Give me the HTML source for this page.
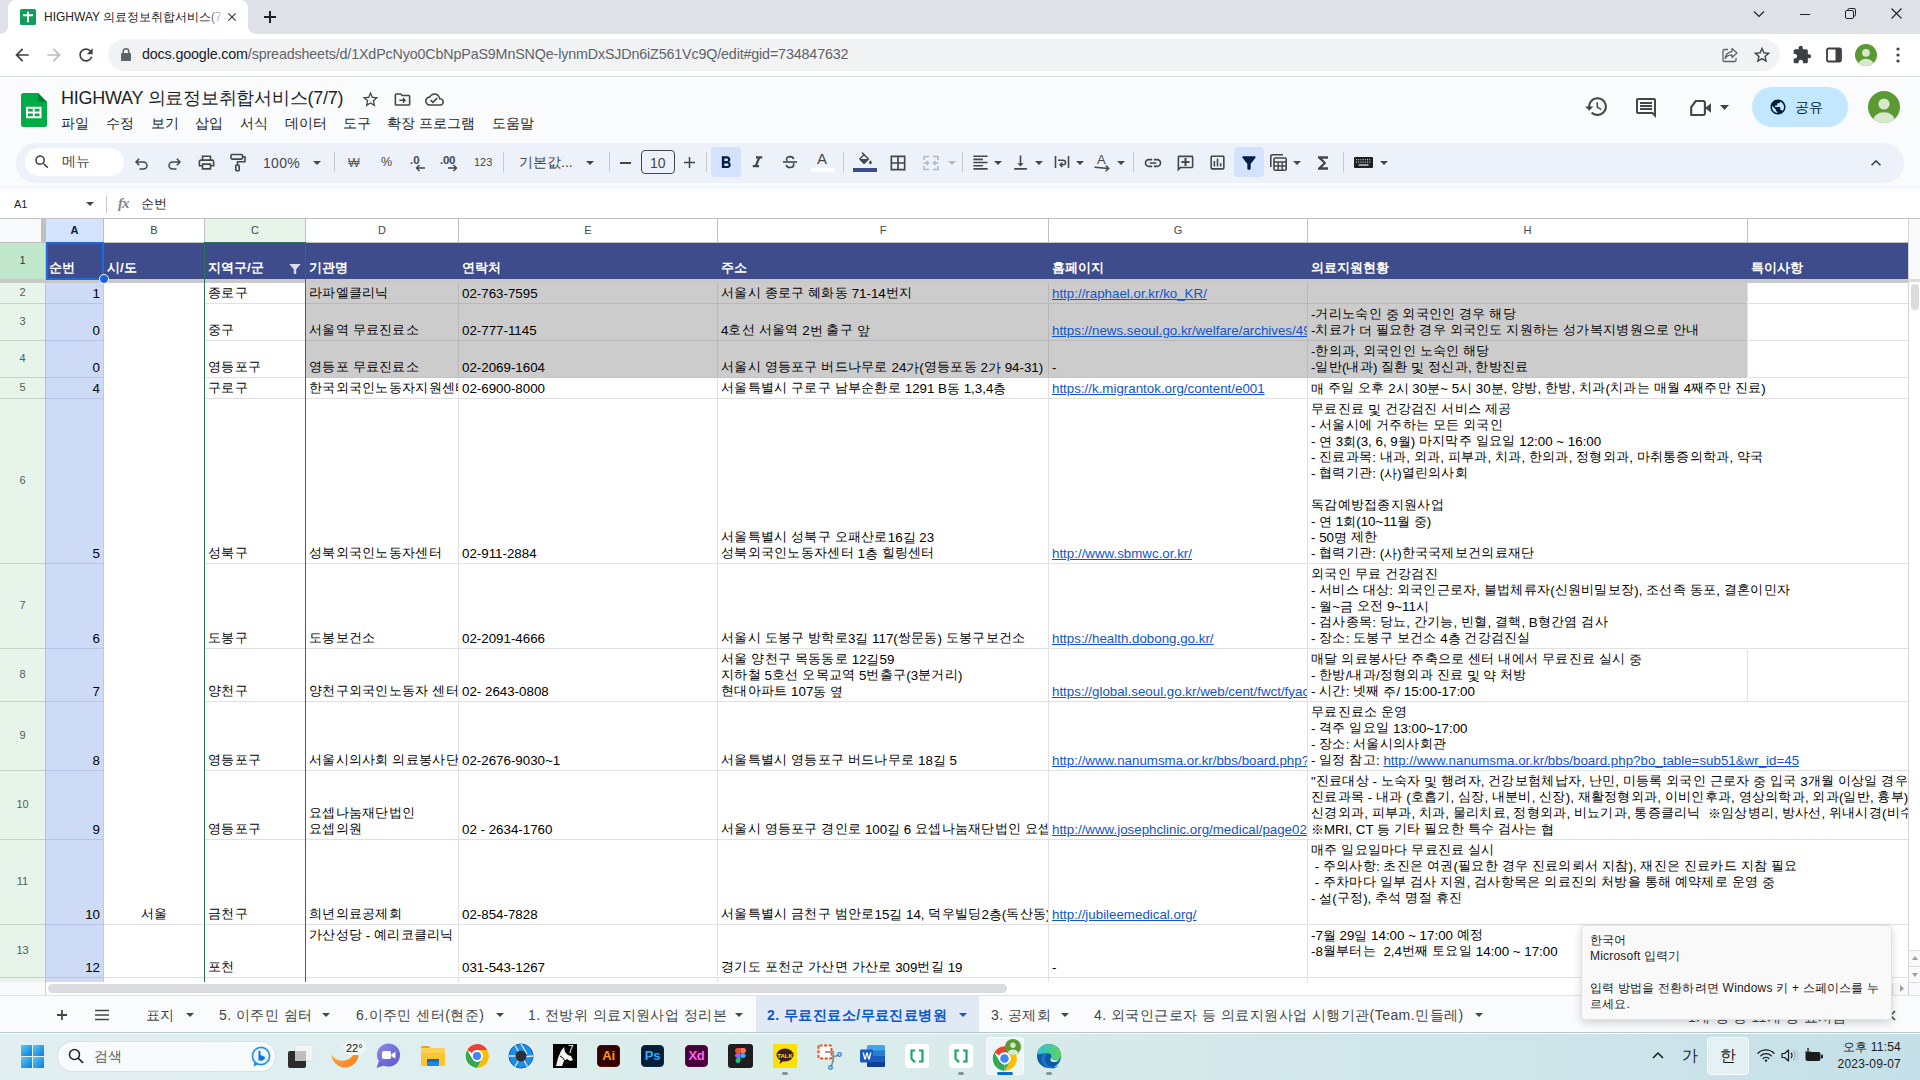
<!DOCTYPE html>
<html lang="ko">
<head>
<meta charset="utf-8">
<title>HIGHWAY 의료정보취합서비스(7/7)</title>
<style>
*{box-sizing:border-box;margin:0;padding:0}
html,body{width:1920px;height:1080px;overflow:hidden;background:#fff}
body{font-family:"Liberation Sans",sans-serif;color:#1f1f1f;position:relative}
.abs,.abs>*{position:absolute}
.t{position:absolute;white-space:nowrap;line-height:1}
svg{position:absolute;overflow:visible}
/* ---------- chrome ---------- */
#tabstrip{left:0;top:0;width:1920px;height:34px;background:#dee1e6}
#tab{left:8px;top:0;width:240px;height:34px;background:#fff;border-radius:8px 8px 0 0}
#navbar{left:0;top:34px;width:1920px;height:43px;background:#fff;border-bottom:1px solid #dadce0}
#omni{left:108px;top:39px;width:1672px;height:32px;border-radius:16px;background:#f1f3f4}
/* ---------- docs header ---------- */
#dochead{left:0;top:77px;width:1920px;height:142px;background:#f9fbfd}
#toolbar{left:16px;top:143px;width:1888px;height:40px;border-radius:20px;background:#edf2fa}
#fbar{left:0;top:190px;width:1920px;height:28px;background:#fff}
/* ---------- grid ---------- */
#grid{left:0;top:0;width:1908px;height:982px;overflow:hidden}
.c{position:absolute;white-space:pre;font-size:13.33px;line-height:16px;overflow:hidden;color:#000;display:flex;flex-direction:column;justify-content:flex-end}
.c>div{position:static;height:16px;flex:none}
a{color:#1155cc;text-decoration:underline}
.k{letter-spacing:.28px;position:relative;top:-1px}
/* ---------- bottom ---------- */
#sheetbar{left:0;top:996px;width:1920px;height:38px;background:#f9fbfd}
#taskbar{left:0;top:1034px;width:1920px;height:46px;background:linear-gradient(90deg,#e1eff3 0%,#deeeee 25%,#d9ebeb 50%,#d1e6ea 72%,#c5e0e8 100%)}
</style>
</head>
<body>
<!-- CHROME TAB STRIP -->
<div id="tabstrip" class="abs"></div>
<div id="tab" class="abs"></div>
<svg style="left:0;top:26px" width="8" height="8" viewBox="0 0 8 8"><path d="M0 8h8V0A8 8 0 0 1 0 8z" fill="#fff"/></svg>
<svg style="left:248px;top:26px" width="8" height="8" viewBox="0 0 8 8"><path d="M8 8H0V0a8 8 0 0 0 8 8z" fill="#fff"/></svg>
<!-- favicon -->
<svg style="left:20px;top:9px" width="16" height="16" viewBox="0 0 16 16"><rect width="16" height="16" rx="1.5" fill="#0f9d58"/><path d="M3 5.2h10v2H9v6H7v-6H3z" fill="#fff"/><rect x="7" y="2.6" width="2" height="3" fill="#fff"/></svg>
<div class="t" style="left:44px;top:10px;font-size:12px;color:#202124;width:178px;overflow:hidden;height:15px;line-height:14px">HIGHWAY 의료정보취합서비스(7/7) - Google Sheets</div>
<div class="abs" style="left:206px;top:6px;width:18px;height:22px;background:linear-gradient(90deg,rgba(255,255,255,0),#fff)"></div>
<svg style="left:225px;top:10px" width="14" height="14" viewBox="0 0 24 24"><path d="M19 6.41L17.59 5 12 10.59 6.41 5 5 6.41 10.59 12 5 17.59 6.41 19 12 13.41 17.59 19 19 17.59 13.41 12z" fill="#3c4043"/></svg>
<svg style="left:263px;top:10px" width="14" height="14" viewBox="0 0 14 14"><path d="M6 1h2v5h5v2H8v5H6V8H1V6h5z" fill="#202124"/></svg>
<!-- window controls -->
<svg style="left:1753px;top:9px" width="12" height="10" viewBox="0 0 12 10"><path d="M1 2.5l5 5 5-5" fill="none" stroke="#202124" stroke-width="1.2"/></svg>
<div class="abs" style="left:1800px;top:14px;width:10px;height:1px;background:#202124"></div>
<svg style="left:1845px;top:8px" width="11" height="11" viewBox="0 0 11 11"><rect x=".5" y="2.5" width="8" height="8" rx="1.5" fill="none" stroke="#202124"/><path d="M2.8 2.3V2a1.5 1.5 0 0 1 1.5-1.5H9A1.5 1.5 0 0 1 10.5 2v4.7A1.5 1.5 0 0 1 9 8.2h-.4" fill="none" stroke="#202124"/></svg>
<svg style="left:1891px;top:8px" width="11" height="11" viewBox="0 0 11 11"><path d="M.5.5l10 10M10.500 .5l-10 10" fill="none" stroke="#202124" stroke-width="1.1"/></svg>
<!-- NAV BAR -->
<div id="navbar" class="abs"></div>
<div id="omni" class="abs"></div>
<svg style="left:12px;top:45px" width="20" height="20" viewBox="0 0 24 24"><path d="M20 11H7.83l5.59-5.59L12 4l-8 8 8 8 1.41-1.41L7.83 13H20v-2z" fill="#3c4043"/></svg>
<svg style="left:44px;top:45px" width="20" height="20" viewBox="0 0 24 24"><path d="M12 4l-1.41 1.41L16.170 11H4v2h12.170l-5.580 5.590L12 20l8-8z" fill="#babcbe"/></svg>
<svg style="left:76px;top:45px" width="20" height="20" viewBox="0 0 24 24"><path d="M17.650 6.350C16.200 4.900 14.210 4 12 4c-4.420 0-7.990 3.580-7.990 8s3.570 8 7.990 8c3.730 0 6.840-2.550 7.730-6h-2.080c-.82 2.330-3.040 4-5.650 4-3.310 0-6-2.690-6-6s2.690-6 6-6c1.660 0 3.140.69 4.220 1.780L13 11h7V4l-2.350 2.350z" fill="#3c4043"/></svg>
<svg style="left:120px;top:48px" width="12" height="14" viewBox="0 0 12 14"><path d="M10 5H9.500V3.500a3.500 3.500 0 0 0-7 0V5H2a1 1 0 0 0-1 1v6a1 1 0 0 0 1 1h8a1 1 0 0 0 1-1V6a1 1 0 0 0-1-1zM4 3.500a2 2 0 0 1 4 0V5H4z" fill="#5f6368"/></svg>
<div class="t" id="url" style="left:142px;top:47px;font-size:14.3px;color:#5f6368;letter-spacing:-0.15px"><span style="color:#202124">docs.google.com</span>/spreadsheets/d/1XdPcNyo0CbNpPaS9MnSNQe-lynmDxSJDn6iZ561Vc9Q/edit#gid=734847632</div>
<!-- omnibox right icons -->
<svg style="left:1721px;top:46px" width="18" height="18" viewBox="0 0 18 18"><path d="M11 2.500l5 4.500-5 4.500V8.800C7.500 8.800 5.500 10 4.200 12.500 4.600 8.800 7 6.200 11 5.600z" fill="none" stroke="#5f6368" stroke-width="1.3" stroke-linejoin="round"/><path d="M7 3.500H3.200A1.200 1.200 0 0 0 2 4.700v9.600a1.200 1.200 0 0 0 1.200 1.200h10.600a1.200 1.200 0 0 0 1.200-1.200V12" fill="none" stroke="#5f6368" stroke-width="1.3"/></svg>
<svg style="left:1752px;top:45px" width="20" height="20" viewBox="0 0 24 24"><path d="M22 9.240l-7.190-.62L12 2 9.190 8.630 2 9.240l5.460 4.730L5.820 21 12 17.270 18.180 21l-1.630-7.030L22 9.240zM12 15.400l-3.760 2.270 1-4.280-3.320-2.880 4.380-.38L12 6.100l1.710 4.040 4.380.38-3.320 2.880 1 4.280L12 15.400z" fill="#3c4043"/></svg>
<svg style="left:1792px;top:45px" width="20" height="20" viewBox="0 0 24 24"><path d="M20.500 11H19V7c0-1.100-.9-2-2-2h-4V3.500C13 2.120 11.880 1 10.500 1S8 2.120 8 3.500V5H4c-1.100 0-1.990.9-1.990 2v3.800H3.500c1.490 0 2.700 1.210 2.700 2.700s-1.210 2.700-2.700 2.700H2V20c0 1.100.9 2 2 2h3.800v-1.500c0-1.490 1.210-2.700 2.700-2.700 1.490 0 2.700 1.210 2.700 2.700V22H17c1.100 0 2-.9 2-2v-4h1.500c1.380 0 2.500-1.120 2.500-2.500S21.880 11 20.500 11z" fill="#3c4043"/></svg>
<svg style="left:1826px;top:47px" width="16" height="16" viewBox="0 0 16 16"><rect x="1" y="1.500" width="14" height="13" rx="1.500" fill="none" stroke="#3c4043" stroke-width="1.800"/><rect x="9.500" y="2" width="5" height="12" fill="#3c4043"/></svg>
<svg style="left:1855px;top:44px" width="22" height="22" viewBox="0 0 22 22"><defs><clipPath id="cpa"><circle cx="11" cy="11" r="11"/></clipPath></defs><circle cx="11" cy="11" r="11" fill="#5b9a32"/><g clip-path="url(#cpa)" fill="#d7e8cf"><circle cx="11" cy="8.800" r="3.900"/><ellipse cx="11" cy="20.500" rx="7.600" ry="5.800"/></g></svg>
<svg style="left:1896px;top:47px" width="4" height="16" viewBox="0 0 4 16"><circle cx="2" cy="2" r="1.600" fill="#3c4043"/><circle cx="2" cy="8" r="1.600" fill="#3c4043"/><circle cx="2" cy="14" r="1.600" fill="#3c4043"/></svg>
<!-- DOCS HEADER -->
<div id="dochead" class="abs"></div>
<svg style="left:21px;top:93px" width="26" height="34" viewBox="0 0 26 34"><path d="M2.500 0H17l9 9v22.500a2.500 2.500 0 0 1-2.500 2.500h-21A2.500 2.500 0 0 1 0 31.500v-29A2.500 2.500 0 0 1 2.500 0z" fill="#00ac47"/><path d="M17 0l9 9h-6.500A2.500 2.500 0 0 1 17 6.500z" fill="#00832d"/><path d="M5 13.800h15.500v11.400H5zm2 2v2.700h4.800v-2.700zm6.700 0v2.700h4.800v-2.700zm-6.700 4.600v2.800h4.800v-2.800zm6.700 0v2.800h4.800v-2.800z" fill="#fff" fill-rule="evenodd"/></svg>
<div class="t" id="doctitle" style="left:61px;top:88px;font-size:18px;letter-spacing:-0.25px;color:#1f1f1f;line-height:20px">HIGHWAY 의료정보취합서비스(7/7)</div>
<svg style="left:361px;top:90px" width="19" height="19" viewBox="0 0 24 24"><path d="M22 9.240l-7.190-.62L12 2 9.190 8.630 2 9.240l5.460 4.730L5.820 21 12 17.270 18.180 21l-1.630-7.030L22 9.240zM12 15.400l-3.760 2.270 1-4.280-3.320-2.880 4.380-.38L12 6.100l1.710 4.040 4.380.38-3.320 2.880 1 4.280L12 15.400z" fill="#444746"/></svg>
<svg style="left:393px;top:90px" width="19" height="19" viewBox="0 0 24 24"><path d="M20 6h-8l-2-2H4c-1.100 0-2 .9-2 2v12c0 1.100.9 2 2 2h16c1.100 0 2-.9 2-2V8c0-1.100-.9-2-2-2zm0 12H4V6h5.170l2 2H20v10zm-7.500-1l4-4-4-4v3H8v2h4.500v3z" fill="#444746"/></svg>
<svg style="left:425px;top:90px" width="19" height="19" viewBox="0 0 24 24"><path d="M19.350 10.040C18.670 6.590 15.640 4 12 4 9.110 4 6.600 5.640 5.350 8.040 2.340 8.360 0 10.910 0 14c0 3.310 2.690 6 6 6h13c2.760 0 5-2.240 5-5 0-2.640-2.050-4.780-4.650-4.960zM19 18H6c-2.210 0-4-1.790-4-4 0-2.050 1.530-3.760 3.560-3.970l1.070-.11.5-.95C8.080 7.140 9.940 6 12 6c2.620 0 4.880 1.860 5.390 4.430l.3 1.500 1.530.11c1.560.1 2.780 1.410 2.780 2.960 0 1.650-1.350 3-3 3zm-9-3.820l-2.090-2.090L6.500 13.500 10 17l6.010-6.010-1.410-1.410z" fill="#444746"/></svg>
<div class="t menu" style="left:61px;top:115px;font-size:14px;color:#1f1f1f;line-height:16px">파일</div>
<div class="t menu" style="left:106px;top:115px;font-size:14px;color:#1f1f1f;line-height:16px">수정</div>
<div class="t menu" style="left:151px;top:115px;font-size:14px;color:#1f1f1f;line-height:16px">보기</div>
<div class="t menu" style="left:195px;top:115px;font-size:14px;color:#1f1f1f;line-height:16px">삽입</div>
<div class="t menu" style="left:240px;top:115px;font-size:14px;color:#1f1f1f;line-height:16px">서식</div>
<div class="t menu" style="left:285px;top:115px;font-size:14px;color:#1f1f1f;line-height:16px">데이터</div>
<div class="t menu" style="left:343px;top:115px;font-size:14px;color:#1f1f1f;line-height:16px">도구</div>
<div class="t menu" style="left:387px;top:115px;font-size:14px;color:#1f1f1f;line-height:16px">확장 프로그램</div>
<div class="t menu" style="left:492px;top:115px;font-size:14px;color:#1f1f1f;line-height:16px">도움말</div>
<svg style="left:1584px;top:94px" width="25" height="25" viewBox="0 0 24 24"><path d="M13 3c-4.970 0-9 4.030-9 9H1l3.890 3.890.07.14L9 12H6c0-3.870 3.130-7 7-7s7 3.130 7 7-3.130 7-7 7c-1.930 0-3.680-.79-4.940-2.060l-1.420 1.420C8.270 19.990 10.510 21 13 21c4.970 0 9-4.030 9-9s-4.030-9-9-9zm-1 5v5l4.280 2.540.72-1.210-3.500-2.080V8H12z" fill="#444746"/></svg>
<svg style="left:1634px;top:96px" width="24" height="24" viewBox="0 0 24 24"><path d="M21.990 4c0-1.100-.89-2-1.990-2H4c-1.100 0-2 .9-2 2v12c0 1.100.9 2 2 2h14l4 4-.01-18zM20 4v13.170L18.830 16H4V4h16zM6 12h12v2H6zm0-3h12v2H6zm0-3h12v2H6z" fill="#444746"/></svg>
<svg style="left:1690px;top:99px" width="22" height="18" viewBox="0 0 22 18"><path d="M1.200 16V8.200L5.800 2H13.300A1.600 1.600 0 0 1 14.900 3.600V14.400A1.600 1.600 0 0 1 13.300 16Z" fill="none" stroke="#444746" stroke-width="2.100" stroke-linejoin="round"/><path d="M15 9L21 4.300v9.400z" fill="#444746"/></svg>
<svg style="left:1720px;top:105px" width="9" height="5" viewBox="0 0 9 5"><path d="M0 0h9L4.500 5z" fill="#444746"/></svg>
<div class="abs" style="left:1752px;top:87px;width:96px;height:40px;border-radius:20px;background:#c2e7ff"></div>
<svg style="left:1769px;top:98px" width="18" height="18" viewBox="0 0 24 24"><path d="M12 2C6.480 2 2 6.480 2 12s4.480 10 10 10 10-4.480 10-10S17.520 2 12 2zm-1 17.930c-3.950-.49-7-3.850-7-7.930 0-.62.08-1.210.21-1.790L9 15v1c0 1.100.9 2 2 2v1.930zm6.900-2.540c-.26-.81-1-1.390-1.900-1.390h-1v-3c0-.55-.45-1-1-1H8v-2h2c.55 0 1-.45 1-1V7h2c1.100 0 2-.9 2-2v-.41c2.930 1.190 5 4.060 5 7.410 0 2.080-.8 3.970-2.100 5.390z" fill="#001d35"/></svg>
<div class="t" style="left:1795px;top:99px;font-size:14px;color:#001d35;line-height:16px;font-weight:500">공유</div>
<svg style="left:1868px;top:91px" width="32" height="32" viewBox="0 0 32 32"><defs><clipPath id="cpb"><circle cx="16" cy="16" r="16"/></clipPath></defs><circle cx="16" cy="16" r="16" fill="#5b9a32"/><g clip-path="url(#cpb)" fill="#d7e8cf"><circle cx="16" cy="13" r="5.600"/><ellipse cx="16" cy="29.500" rx="11" ry="8.200"/></g></svg>
<div id="toolbar" class="abs"></div>
<div class="abs" style="left:25px;top:148px;width:99px;height:28px;border-radius:14px;background:#fff"></div>
<svg style="left:33px;top:153px" width="18" height="18" viewBox="0 0 24 24"><path d="M15.500 14h-.79l-.28-.27C15.410 12.590 16 11.110 16 9.500 16 5.910 13.090 3 9.500 3S3 5.910 3 9.500 5.910 16 9.500 16c1.610 0 3.090-.59 4.230-1.570l.27.28v.79l5 4.990L20.490 19l-4.990-5zm-6 0C7.010 14 5 11.990 5 9.500S7.010 5 9.500 5 14 7.010 14 9.500 11.990 14 9.500 14z" fill="#444746"/></svg>
<div class="t" style="left:62px;top:153px;font-size:14px;color:#444746;line-height:16px">메뉴</div>
<svg style="left:134px;top:156px" width="16" height="16" viewBox="0 0 16 16"><path d="M5.200 2.800L2 6l3.200 3.200M2.300 6h7.200a3.500 3.500 0 0 1 0 7H5.500" fill="none" stroke="#444746" stroke-width="1.500"/></svg>
<svg style="left:166px;top:156px" width="16" height="16" viewBox="0 0 16 16"><path d="M10.800 2.800L14 6l-3.200 3.200M13.700 6H6.500a3.500 3.500 0 0 0 0 7h4" fill="none" stroke="#444746" stroke-width="1.500"/></svg>
<svg style="left:196.5px;top:153px" width="19" height="19" viewBox="0 0 24 24"><path d="M19 8h-1V3H6v5H5c-1.660 0-3 1.340-3 3v6h4v4h12v-4h4v-6c0-1.660-1.340-3-3-3zM8 5h8v3H8V5zm8 12v2H8v-4h8v2zm2-2v-2H6v2H4v-4c0-.55.45-1 1-1h14c.55 0 1 .45 1 1v4h-2z" fill="#444746"/></svg>
<svg style="left:229px;top:153px" width="18" height="19" viewBox="0 0 18 19"><g fill="none" stroke="#444746" stroke-width="1.600" stroke-linejoin="round"><rect x="2" y="1.500" width="11.500" height="4.600" rx="1"/><path d="M13.500 3.800H16v5H8.500v3.200"/><rect x="6.800" y="12" width="3.400" height="5.800" rx=".8"/></g></svg>
<div class="t" style="left:263px;top:155px;font-size:14px;color:#444746;line-height:16px;letter-spacing:.3px">100%</div>
<svg style="left:313px;top:160.5px" width="8" height="4" viewBox="0 0 8 4"><path d="M0 0h8L4 4z" fill="#444746"/></svg>
<div class="abs" style="left:334px;top:152px;width:1px;height:20px;background:#c7c7c7"></div>
<div class="t" style="left:348px;top:155px;font-size:12.500px;color:#5a5d5c;line-height:16px">₩</div>
<div class="t" style="left:381px;top:154px;font-size:12.500px;color:#444746;line-height:16px">%</div>
<div class="t" style="left:410px;top:152px;font-size:11.500px;color:#444746;line-height:16px;font-weight:bold">.0</div>
<svg style="left:415px;top:164px" width="10" height="8" viewBox="0 0 10 8"><path d="M10 4H2M4.500 1L1.500 4l3 3" fill="none" stroke="#444746" stroke-width="1.400"/></svg>
<div class="t" style="left:440px;top:152px;font-size:11.500px;color:#444746;line-height:16px;font-weight:bold;letter-spacing:-.3px">.00</div>
<svg style="left:448px;top:164px" width="10" height="8" viewBox="0 0 10 8"><path d="M0 4h8M5.500 1l3 3-3 3" fill="none" stroke="#444746" stroke-width="1.400"/></svg>
<div class="t" style="left:474px;top:154px;font-size:11px;color:#444746;line-height:16px">123</div>
<div class="abs" style="left:503px;top:152px;width:1px;height:20px;background:#c7c7c7"></div>
<div class="t" style="left:519px;top:154px;font-size:14px;color:#444746;line-height:16px">기본값...</div>
<svg style="left:586px;top:160.5px" width="8" height="4" viewBox="0 0 8 4"><path d="M0 0h8L4 4z" fill="#444746"/></svg>
<div class="abs" style="left:609px;top:152px;width:1px;height:20px;background:#c7c7c7"></div>
<div class="abs" style="left:620px;top:162px;width:11px;height:1.500px;background:#444746"></div>
<div class="abs" style="left:641px;top:150px;width:34px;height:24px;border:1px solid #444746;border-radius:4px"></div>
<div class="t" style="left:650px;top:155px;font-size:14px;color:#444746;line-height:16px">10</div>
<svg style="left:684px;top:157px" width="11" height="11" viewBox="0 0 11 11"><path d="M5.500 0v11M0 5.500h11" stroke="#444746" stroke-width="1.500"/></svg>
<div class="abs" style="left:706px;top:152px;width:1px;height:20px;background:#c7c7c7"></div>
<div class="abs" style="left:711px;top:147px;width:30px;height:30px;border-radius:4px;background:#d3e3fd"></div>
<svg style="left:716px;top:152.5px" width="20" height="20" viewBox="0 0 24 24"><path d="M15.600 10.790c.97-.67 1.650-1.770 1.650-2.790 0-2.260-1.750-4-4-4H7v14h7.040c2.090 0 3.710-1.700 3.710-3.790 0-1.520-.86-2.820-2.150-3.420zM10 6.500h3c.83 0 1.500.67 1.500 1.500s-.67 1.500-1.500 1.500h-3v-3zm3.500 9H10v-3h3.500c.83 0 1.500.67 1.500 1.500s-.67 1.500-1.500 1.500z" fill="#041e49"/></svg>
<svg style="left:748px;top:153px" width="19" height="19" viewBox="0 0 24 24"><path d="M10 4v3h2.210l-3.420 8H6v3h8v-3h-2.210l3.420-8H18V4z" fill="#444746"/></svg>
<svg style="left:781px;top:153px" width="18" height="18" viewBox="0 0 18 18"><path d="M12.600 6.200C12.300 4.500 11 3.600 9 3.600c-2.100 0-3.500 1-3.500 2.600 0 .7.300 1.300.9 1.700M5.300 11.800c.2 1.700 1.600 2.700 3.800 2.700 2.100 0 3.600-1 3.600-2.700 0-.6-.2-1.100-.5-1.500" fill="none" stroke="#444746" stroke-width="1.600"/><path d="M2 9h14" stroke="#444746" stroke-width="1.600"/></svg>
<div class="t" style="left:817px;top:151px;font-size:15px;color:#444746;line-height:16px">A</div>
<div class="abs" style="left:811px;top:168px;width:24px;height:4px;background:#fff"></div>
<div class="abs" style="left:843px;top:152px;width:1px;height:20px;background:#c7c7c7"></div>
<svg style="left:856.5px;top:151.5px" width="17" height="17" viewBox="0 0 24 24"><path d="M16.560 8.940L7.620 0 6.210 1.410l2.380 2.380-5.150 5.150c-.59.59-.59 1.540 0 2.120l5.500 5.500c.29.29.68.44 1.060.44s.77-.15 1.060-.44l5.500-5.500c.59-.58.59-1.530 0-2.120zM5.210 10L10 5.210 14.790 10H5.210zM19 11.500s-2 2.170-2 3.500c0 1.100.9 2 2 2s2-.9 2-2c0-1.330-2-3.500-2-3.500z" fill="#444746"/></svg>
<div class="abs" style="left:853px;top:168px;width:24px;height:4px;background:#3d4b8b"></div>
<svg style="left:888px;top:152.5px" width="20" height="20" viewBox="0 0 24 24"><path d="M3 3v18h18V3H3zm8 16H5v-6h6v6zm0-8H5V5h6v6zm8 8h-6v-6h6v6zm0-8h-6V5h6v6z" fill="#444746"/></svg>
<svg style="left:922px;top:154px" width="18" height="18" viewBox="0 0 18 18"><g fill="none" stroke="#b5b9bf" stroke-width="1.600"><path d="M2 6V2.500h5M11 2.500h5V6M2 12v3.500h5M11 15.500h5V12"/><path d="M1.500 9h5M4.500 7l2 2-2 2M16.500 9h-5M13.500 7l-2 2 2 2"/></g></svg>
<svg style="left:947.5px;top:160.5px" width="8" height="4" viewBox="0 0 8 4"><path d="M0 0h8L4 4z" fill="#b5b9bf"/></svg>
<div class="abs" style="left:962px;top:152px;width:1px;height:20px;background:#c7c7c7"></div>
<svg style="left:970.5px;top:153px" width="19" height="19" viewBox="0 0 24 24"><path d="M15 15H3v2h12v-2zm0-8H3v2h12V7zM3 13h18v-2H3v2zm0 8h18v-2H3v2zM3 3v2h18V3H3z" fill="#444746"/></svg>
<svg style="left:994px;top:160.5px" width="8" height="4" viewBox="0 0 8 4"><path d="M0 0h8L4 4z" fill="#444746"/></svg>
<svg style="left:1011px;top:153px" width="19" height="19" viewBox="0 0 24 24"><path d="M16 13h-3V3h-2v10H8l4 4 4-4zM4 19v2h16v-2H4z" fill="#444746"/></svg>
<svg style="left:1035px;top:160.5px" width="8" height="4" viewBox="0 0 8 4"><path d="M0 0h8L4 4z" fill="#444746"/></svg>
<svg style="left:1053px;top:153px" width="18" height="18" viewBox="0 0 18 18"><path d="M2.500 3v12M15.500 3v12" stroke="#444746" stroke-width="1.600"/><path d="M5 7.200h5.200a2.300 2.300 0 0 1 0 4.600H7.500M9.300 9.600l-2.200 2.200 2.200 2.200" fill="none" stroke="#444746" stroke-width="1.500"/></svg>
<svg style="left:1076px;top:160.5px" width="8" height="4" viewBox="0 0 8 4"><path d="M0 0h8L4 4z" fill="#444746"/></svg>
<div class="t" style="left:1097px;top:153px;font-size:13px;color:#444746;line-height:14px">A</div>
<svg style="left:1094px;top:164px" width="18" height="8" viewBox="0 0 18 8"><path d="M.5 3.200L14.500 4.500M11.800 1.500l3 3-3.300 2.700" fill="none" stroke="#444746" stroke-width="1.400"/></svg>
<svg style="left:1116.5px;top:160.5px" width="8" height="4" viewBox="0 0 8 4"><path d="M0 0h8L4 4z" fill="#444746"/></svg>
<div class="abs" style="left:1133px;top:152px;width:1px;height:20px;background:#c7c7c7"></div>
<svg style="left:1142.5px;top:152.5px" width="20" height="20" viewBox="0 0 24 24"><path d="M3.900 12c0-1.710 1.390-3.100 3.100-3.100h4V7H7c-2.760 0-5 2.240-5 5s2.240 5 5 5h4v-1.900H7c-1.710 0-3.100-1.390-3.100-3.100zM8 13h8v-2H8v2zm9-6h-4v1.900h4c1.710 0 3.100 1.390 3.100 3.100s-1.390 3.100-3.100 3.100h-4V17h4c2.760 0 5-2.240 5-5s-2.240-5-5-5z" fill="#444746"/></svg>
<svg style="left:1175.500px;top:153.500px" width="19" height="19" viewBox="0 0 24 24"><path transform="translate(24 0) scale(-1 1)" d="M22 4c0-1.100-.9-2-2-2H4c-1.100 0-2 .9-2 2v12c0 1.100.9 2 2 2h14l4 4V4zm-2 13.170L18.830 16H4V4h16v13.170zM13 5h-2v4H7v2h4v4h2v-4h4V9h-4z" fill="#444746"/><path d="M13 5h-2v4H7v2h4v4h2v-4h4V9h-4z" fill="#444746"/></svg>
<svg style="left:1207.5px;top:153px" width="19" height="19" viewBox="0 0 24 24"><path d="M9 17H7v-7h2v7zm4 0h-2V7h2v10zm4 0h-2v-4h2v4zm2 2H5V5h14v14zm0-16H5c-1.100 0-2 .9-2 2v14c0 1.100.9 2 2 2h14c1.100 0 2-.9 2-2V5c0-1.100-.9-2-2-2z" fill="#444746"/></svg>
<div class="abs" style="left:1234px;top:147px;width:30px;height:30px;border-radius:4px;background:#d3e3fd"></div>
<svg style="left:1239px;top:152.5px" width="20" height="20" viewBox="0 0 24 24"><path d="M4.250 5.610C6.270 8.200 10 13 10 13v6c0 .55.45 1 1 1h2c.55 0 1-.45 1-1v-6s3.720-4.800 5.740-7.390c.51-.66.04-1.610-.79-1.610H5.040c-.83 0-1.300.95-.79 1.610z" fill="#041e49"/></svg>
<svg style="left:1269px;top:153px" width="19" height="19" viewBox="0 0 19 19"><path d="M1.800 14V3.200A1.400 1.400 0 0 1 3.200 1.800H14" fill="none" stroke="#444746" stroke-width="1.600"/><rect x="5" y="5" width="12.200" height="12.200" rx="1.300" fill="none" stroke="#444746" stroke-width="1.600"/><path d="M5 9h12M5 13h12M9.200 9v8M13.200 9v8" stroke="#444746" stroke-width="1.400"/></svg>
<svg style="left:1293px;top:160.5px" width="8" height="4" viewBox="0 0 8 4"><path d="M0 0h8L4 4z" fill="#444746"/></svg>
<svg style="left:1312.5px;top:152.5px" width="20" height="20" viewBox="0 0 24 24"><path d="M18 4H6v2l6.500 6L6 18v2h12v-3h-7l5-5-5-5h7z" fill="#444746"/></svg>
<div class="abs" style="left:1343px;top:152px;width:1px;height:20px;background:#c7c7c7"></div>
<svg style="left:1354px;top:157px" width="19" height="11" viewBox="0 0 19 11"><rect width="19" height="11" rx="1" fill="#1f1f1f"/><g fill="#edf2fa"><rect x="2.0" y="2.2" width="1" height="1"/><rect x="4.2" y="2.2" width="1" height="1"/><rect x="6.4" y="2.2" width="1" height="1"/><rect x="8.6" y="2.2" width="1" height="1"/><rect x="10.8" y="2.2" width="1" height="1"/><rect x="13.0" y="2.2" width="1" height="1"/><rect x="15.2" y="2.2" width="1" height="1"/><rect x="2.0" y="4.6" width="1" height="1"/><rect x="4.2" y="4.6" width="1" height="1"/><rect x="6.4" y="4.6" width="1" height="1"/><rect x="8.6" y="4.6" width="1" height="1"/><rect x="10.8" y="4.6" width="1" height="1"/><rect x="13.0" y="4.6" width="1" height="1"/><rect x="15.2" y="4.6" width="1" height="1"/><rect x="4.500" y="7.400" width="10" height="1.200"/></g></svg>
<svg style="left:1380px;top:160.5px" width="8" height="4" viewBox="0 0 8 4"><path d="M0 0h8L4 4z" fill="#444746"/></svg>
<svg style="left:1866px;top:152.5px" width="20" height="20" viewBox="0 0 24 24"><path d="M12 8l-6 6 1.410 1.410L12 10.830l4.590 4.580L18 14z" fill="#444746"/></svg>
<div id="fbar" class="abs"></div>
<div class="abs" style="left:0;top:186px;width:1920px;height:4px;background:linear-gradient(#eef2f9,#fff)"></div>
<div class="t" style="left:14px;top:197px;font-size:11px;color:#1f1f1f;line-height:14px">A1</div>
<svg style="left:86px;top:202px" width="8" height="4" viewBox="0 0 8 4"><path d="M0 0h8L4 4z" fill="#444746"/></svg>
<div class="abs" style="left:106px;top:196px;width:1px;height:17px;background:#c7c7c7"></div>
<div class="t" style="left:118px;top:195px;font-size:15px;color:#80868b;line-height:16px;font-family:'Liberation Serif',serif;font-style:italic;font-weight:bold;letter-spacing:-1px">fx</div>
<div class="t" style="left:141px;top:196px;font-size:13px;color:#1f1f1f;line-height:16px">순번</div>
<div id="grid" class="abs">
<div style="left:0;top:218px;width:1908px;height:1px;background:#c0c0c0"></div>
<div style="left:0;top:219px;width:1908px;height:23px;background:#fff"></div>
<div style="left:0;top:219px;width:41px;height:23px;background:#f8f9fa"></div>
<div style="left:41px;top:219px;width:5px;height:23px;background:#c0c0c0"></div>
<div style="left:0;top:242px;width:46px;height:1px;background:#c0c0c0"></div>
<div style="left:46px;top:219px;width:57px;height:24px;background:#d3e3fd"></div>
<div style="left:205px;top:219px;width:100px;height:23px;background:#e6f4ea"></div>
<div style="left:103px;top:242px;width:1805px;height:1px;background:#c0c0c0"></div>
<div class="t" style="left:46px;width:57px;top:224px;text-align:center;font-size:11px;line-height:12px;font-weight:bold;color:#041e49">A</div>
<div style="left:103px;top:219px;width:1px;height:23px;background:#c0c0c0"></div>
<div class="t" style="left:104px;width:100px;top:224px;text-align:center;font-size:11px;line-height:12px;color:#444746">B</div>
<div style="left:204px;top:219px;width:1px;height:23px;background:#c0c0c0"></div>
<div class="t" style="left:205px;width:100px;top:224px;text-align:center;font-size:11px;line-height:12px;color:#444746">C</div>
<div style="left:305px;top:219px;width:1px;height:23px;background:#c0c0c0"></div>
<div class="t" style="left:306px;width:152px;top:224px;text-align:center;font-size:11px;line-height:12px;color:#444746">D</div>
<div style="left:458px;top:219px;width:1px;height:23px;background:#c0c0c0"></div>
<div class="t" style="left:459px;width:258px;top:224px;text-align:center;font-size:11px;line-height:12px;color:#444746">E</div>
<div style="left:717px;top:219px;width:1px;height:23px;background:#c0c0c0"></div>
<div class="t" style="left:718px;width:330px;top:224px;text-align:center;font-size:11px;line-height:12px;color:#444746">F</div>
<div style="left:1048px;top:219px;width:1px;height:23px;background:#c0c0c0"></div>
<div class="t" style="left:1049px;width:258px;top:224px;text-align:center;font-size:11px;line-height:12px;color:#444746">G</div>
<div style="left:1307px;top:219px;width:1px;height:23px;background:#c0c0c0"></div>
<div class="t" style="left:1308px;width:439px;top:224px;text-align:center;font-size:11px;line-height:12px;color:#444746">H</div>
<div style="left:1747px;top:219px;width:1px;height:23px;background:#c0c0c0"></div>
<div style="left:0;top:243px;width:45px;height:739px;background:#e6f4ea"></div>
<div style="left:0;top:243px;width:45px;height:36px;background:#c1e8cd"></div>
<div style="left:45px;top:243px;width:1px;height:739px;background:#c0c0c0"></div>
<div style="left:46px;top:243px;width:1862px;height:36px;background:#3e4c8b"></div>
<div class="t" style="left:49px;top:260px;font-size:13.33px;font-weight:bold;color:#fff;line-height:16px">순번</div>
<div class="t" style="left:107px;top:260px;font-size:13.33px;font-weight:bold;color:#fff;line-height:16px">시/도</div>
<div class="t" style="left:208px;top:260px;font-size:13.33px;font-weight:bold;color:#fff;line-height:16px">지역구/군</div>
<div class="t" style="left:309px;top:260px;font-size:13.33px;font-weight:bold;color:#fff;line-height:16px">기관명</div>
<div class="t" style="left:462px;top:260px;font-size:13.33px;font-weight:bold;color:#fff;line-height:16px">연락처</div>
<div class="t" style="left:721px;top:260px;font-size:13.33px;font-weight:bold;color:#fff;line-height:16px">주소</div>
<div class="t" style="left:1052px;top:260px;font-size:13.33px;font-weight:bold;color:#fff;line-height:16px">홈페이지</div>
<div class="t" style="left:1311px;top:260px;font-size:13.33px;font-weight:bold;color:#fff;line-height:16px">의료지원현황</div>
<div class="t" style="left:1751px;top:260px;font-size:13.33px;font-weight:bold;color:#fff;line-height:16px">특이사항</div>
<svg style="left:289px;top:263px" width="12" height="12" viewBox="0 0 12 12"><path d="M.3 1h11.400L7.200 6.300V11H4.800V6.300z" fill="#d9dcee"/></svg>
<div class="t" style="left:0;width:45px;top:254px;text-align:center;font-size:11px;color:#1f3b2a;line-height:12px">1</div>
<div style="left:0;top:279px;width:1908px;height:4px;background:#c9c9c9"></div>
<div style="left:46px;top:283px;width:57px;height:699px;background:#cddbf7"></div>
<div style="left:306px;top:283px;width:1441px;height:94px;background:#cccccc"></div>
<div style="left:103px;top:283px;width:1px;height:699px;background:#e1e1e1"></div>
<div style="left:458px;top:283px;width:1px;height:699px;background:#e1e1e1"></div>
<div style="left:458px;top:283px;width:1px;height:94px;background:#b9b9b9"></div>
<div style="left:717px;top:283px;width:1px;height:699px;background:#e1e1e1"></div>
<div style="left:717px;top:283px;width:1px;height:94px;background:#b9b9b9"></div>
<div style="left:1048px;top:283px;width:1px;height:699px;background:#e1e1e1"></div>
<div style="left:1048px;top:283px;width:1px;height:94px;background:#b9b9b9"></div>
<div style="left:1307px;top:283px;width:1px;height:699px;background:#e1e1e1"></div>
<div style="left:1307px;top:283px;width:1px;height:94px;background:#b9b9b9"></div>
<div style="left:103px;top:283px;width:1px;height:699px;background:#bccbe8"></div>
<div style="left:1747px;top:283px;width:1px;height:20px;background:#e1e1e1"></div>
<div style="left:1747px;top:304px;width:1px;height:36px;background:#e1e1e1"></div>
<div style="left:1747px;top:341px;width:1px;height:36px;background:#e1e1e1"></div>
<div style="left:1747px;top:649px;width:1px;height:52px;background:#e1e1e1"></div>
<div style="left:1747px;top:925px;width:1px;height:52px;background:#e1e1e1"></div>
<div style="left:1747px;top:978px;width:1px;height:22px;background:#e1e1e1"></div>
<div style="left:0;top:303px;width:45px;height:1px;background:#c3d2c8"></div>
<div style="left:46px;top:303px;width:57px;height:1px;background:#b5c4e3"></div>
<div style="left:205px;top:303px;width:100px;height:1px;background:#e1e1e1"></div>
<div style="left:306px;top:303px;width:1441px;height:1px;background:#b9b9b9"></div>
<div style="left:1748px;top:303px;width:160px;height:1px;background:#e1e1e1"></div>
<div style="left:0;top:340px;width:45px;height:1px;background:#c3d2c8"></div>
<div style="left:46px;top:340px;width:57px;height:1px;background:#b5c4e3"></div>
<div style="left:205px;top:340px;width:100px;height:1px;background:#e1e1e1"></div>
<div style="left:306px;top:340px;width:1441px;height:1px;background:#b9b9b9"></div>
<div style="left:1748px;top:340px;width:160px;height:1px;background:#e1e1e1"></div>
<div style="left:0;top:377px;width:45px;height:1px;background:#c3d2c8"></div>
<div style="left:46px;top:377px;width:57px;height:1px;background:#b5c4e3"></div>
<div style="left:205px;top:377px;width:100px;height:1px;background:#e1e1e1"></div>
<div style="left:306px;top:377px;width:1441px;height:1px;background:#c4c4c4"></div>
<div style="left:1748px;top:377px;width:160px;height:1px;background:#e1e1e1"></div>
<div style="left:0;top:398px;width:45px;height:1px;background:#c3d2c8"></div>
<div style="left:46px;top:398px;width:57px;height:1px;background:#b5c4e3"></div>
<div style="left:205px;top:398px;width:100px;height:1px;background:#e1e1e1"></div>
<div style="left:306px;top:398px;width:1602px;height:1px;background:#e1e1e1"></div>
<div style="left:0;top:563px;width:45px;height:1px;background:#c3d2c8"></div>
<div style="left:46px;top:563px;width:57px;height:1px;background:#b5c4e3"></div>
<div style="left:205px;top:563px;width:100px;height:1px;background:#e1e1e1"></div>
<div style="left:306px;top:563px;width:1602px;height:1px;background:#e1e1e1"></div>
<div style="left:0;top:648px;width:45px;height:1px;background:#c3d2c8"></div>
<div style="left:46px;top:648px;width:57px;height:1px;background:#b5c4e3"></div>
<div style="left:205px;top:648px;width:100px;height:1px;background:#e1e1e1"></div>
<div style="left:306px;top:648px;width:1602px;height:1px;background:#e1e1e1"></div>
<div style="left:0;top:701px;width:45px;height:1px;background:#c3d2c8"></div>
<div style="left:46px;top:701px;width:57px;height:1px;background:#b5c4e3"></div>
<div style="left:205px;top:701px;width:100px;height:1px;background:#e1e1e1"></div>
<div style="left:306px;top:701px;width:1602px;height:1px;background:#e1e1e1"></div>
<div style="left:0;top:770px;width:45px;height:1px;background:#c3d2c8"></div>
<div style="left:46px;top:770px;width:57px;height:1px;background:#b5c4e3"></div>
<div style="left:205px;top:770px;width:100px;height:1px;background:#e1e1e1"></div>
<div style="left:306px;top:770px;width:1602px;height:1px;background:#e1e1e1"></div>
<div style="left:0;top:839px;width:45px;height:1px;background:#c3d2c8"></div>
<div style="left:46px;top:839px;width:57px;height:1px;background:#b5c4e3"></div>
<div style="left:205px;top:839px;width:100px;height:1px;background:#e1e1e1"></div>
<div style="left:306px;top:839px;width:1602px;height:1px;background:#e1e1e1"></div>
<div style="left:0;top:924px;width:45px;height:1px;background:#c3d2c8"></div>
<div style="left:46px;top:924px;width:57px;height:1px;background:#b5c4e3"></div>
<div style="left:104px;top:924px;width:100px;height:1px;background:#e1e1e1"></div>
<div style="left:205px;top:924px;width:100px;height:1px;background:#e1e1e1"></div>
<div style="left:306px;top:924px;width:1602px;height:1px;background:#e1e1e1"></div>
<div style="left:0;top:977px;width:45px;height:1px;background:#c3d2c8"></div>
<div style="left:46px;top:977px;width:57px;height:1px;background:#b5c4e3"></div>
<div style="left:104px;top:977px;width:100px;height:1px;background:#e1e1e1"></div>
<div style="left:205px;top:977px;width:100px;height:1px;background:#e1e1e1"></div>
<div style="left:306px;top:977px;width:1602px;height:1px;background:#e1e1e1"></div>
<div class="t" style="left:0;width:45px;top:286px;text-align:center;font-size:11px;color:#50605a;line-height:12px">2</div>
<div class="t" style="left:0;width:45px;top:315px;text-align:center;font-size:11px;color:#50605a;line-height:12px">3</div>
<div class="t" style="left:0;width:45px;top:352px;text-align:center;font-size:11px;color:#50605a;line-height:12px">4</div>
<div class="t" style="left:0;width:45px;top:381px;text-align:center;font-size:11px;color:#50605a;line-height:12px">5</div>
<div class="t" style="left:0;width:45px;top:474px;text-align:center;font-size:11px;color:#50605a;line-height:12px">6</div>
<div class="t" style="left:0;width:45px;top:599px;text-align:center;font-size:11px;color:#50605a;line-height:12px">7</div>
<div class="t" style="left:0;width:45px;top:668px;text-align:center;font-size:11px;color:#50605a;line-height:12px">8</div>
<div class="t" style="left:0;width:45px;top:729px;text-align:center;font-size:11px;color:#50605a;line-height:12px">9</div>
<div class="t" style="left:0;width:45px;top:798px;text-align:center;font-size:11px;color:#50605a;line-height:12px">10</div>
<div class="t" style="left:0;width:45px;top:875px;text-align:center;font-size:11px;color:#50605a;line-height:12px">11</div>
<div class="t" style="left:0;width:45px;top:944px;text-align:center;font-size:11px;color:#50605a;line-height:12px">13</div>
<div style="left:204px;top:242px;width:1px;height:740px;background:#2b7355"></div>
<div style="left:305px;top:242px;width:1px;height:740px;background:#2b7355"></div>
<div style="left:204px;top:242px;width:102px;height:1px;background:#2b7355"></div>
<div style="left:46px;top:242px;width:58px;height:38px;border:2px solid #1a6be0"></div>
<div style="left:99px;top:274px;width:10px;height:10px;border-radius:5px;background:#1a62d6;border:1px solid #fff;box-sizing:border-box"></div>
<div class="c" style="left:46px;top:283px;width:57px;height:20px;padding:0 3px 1.500px 3px;text-align:right;"><div>1</div></div>
<div class="c" style="left:205px;top:283px;width:100px;height:20px;padding:0 3px 1.500px 3px;"><div><span class="k">종로구</span></div></div>
<div class="c" style="left:306px;top:283px;width:152px;height:20px;padding:0 3px 1.500px 3px;"><div><span class="k">라파엘클리닉</span></div></div>
<div class="c" style="left:459px;top:283px;width:258px;height:20px;padding:0 3px 1.500px 3px;"><div>02-763-7595</div></div>
<div class="c" style="left:718px;top:283px;width:330px;height:20px;padding:0 3px 1.500px 3px;"><div><span class="k">서울시</span> <span class="k">종로구</span> <span class="k">혜화동</span> 71-14<span class="k">번지</span></div></div>
<div class="c" style="left:1049px;top:283px;width:258px;height:20px;padding:0 3px 1.500px 3px;"><div><a>http://raphael.or.kr/ko_KR/</a></div></div>
<div class="c" style="left:46px;top:304px;width:57px;height:36px;padding:0 3px 1.500px 3px;text-align:right;"><div>0</div></div>
<div class="c" style="left:205px;top:304px;width:100px;height:36px;padding:0 3px 1.500px 3px;"><div><span class="k">중구</span></div></div>
<div class="c" style="left:306px;top:304px;width:152px;height:36px;padding:0 3px 1.500px 3px;"><div><span class="k">서울역</span> <span class="k">무료진료소</span></div></div>
<div class="c" style="left:459px;top:304px;width:258px;height:36px;padding:0 3px 1.500px 3px;"><div>02-777-1145</div></div>
<div class="c" style="left:718px;top:304px;width:330px;height:36px;padding:0 3px 1.500px 3px;"><div>4<span class="k">호선</span> <span class="k">서울역</span> 2번 <span class="k">출구</span> 앞</div></div>
<div class="c" style="left:1049px;top:304px;width:258px;height:36px;padding:0 3px 1.500px 3px;"><div><a>https://news.seoul.go.kr/welfare/archives/495331</a></div></div>
<div class="c" style="left:1308px;top:304px;width:439px;height:36px;padding:0 3px 1.500px 3px;"><div>-<span class="k">거리노숙인</span> 중 <span class="k">외국인인</span> <span class="k">경우</span> <span class="k">해당</span></div><div>-<span class="k">치료가</span> 더 <span class="k">필요한</span> <span class="k">경우</span> <span class="k">외국인도</span> <span class="k">지원하는</span> <span class="k">성가복지병원으로</span> <span class="k">안내</span></div></div>
<div class="c" style="left:46px;top:341px;width:57px;height:36px;padding:0 3px 1.500px 3px;text-align:right;"><div>0</div></div>
<div class="c" style="left:205px;top:341px;width:100px;height:36px;padding:0 3px 1.500px 3px;"><div><span class="k">영등포구</span></div></div>
<div class="c" style="left:306px;top:341px;width:152px;height:36px;padding:0 3px 1.500px 3px;"><div><span class="k">영등포</span> <span class="k">무료진료소</span></div></div>
<div class="c" style="left:459px;top:341px;width:258px;height:36px;padding:0 3px 1.500px 3px;"><div>02-2069-1604</div></div>
<div class="c" style="left:718px;top:341px;width:330px;height:36px;padding:0 3px 1.500px 3px;"><div><span class="k">서울시</span> <span class="k">영등포구</span> <span class="k">버드나무로</span> 24가(<span class="k">영등포동</span> 2가 94-31)</div></div>
<div class="c" style="left:1049px;top:341px;width:258px;height:36px;padding:0 3px 1.500px 3px;"><div>-</div></div>
<div class="c" style="left:1308px;top:341px;width:439px;height:36px;padding:0 3px 1.500px 3px;"><div>-<span class="k">한의과</span>, <span class="k">외국인인</span> <span class="k">노숙인</span> <span class="k">해당</span></div><div>-<span class="k">일반</span>(<span class="k">내과</span>) <span class="k">질환</span> 및 <span class="k">정신과</span>, <span class="k">한방진료</span></div></div>
<div class="c" style="left:46px;top:378px;width:57px;height:20px;padding:0 3px 1.500px 3px;text-align:right;"><div>4</div></div>
<div class="c" style="left:205px;top:378px;width:100px;height:20px;padding:0 3px 1.500px 3px;"><div><span class="k">구로구</span></div></div>
<div class="c" style="left:306px;top:378px;width:152px;height:20px;padding:0 3px 1.500px 3px;"><div><span class="k">한국외국인노동자지원센터</span></div></div>
<div class="c" style="left:459px;top:378px;width:258px;height:20px;padding:0 3px 1.500px 3px;"><div>02-6900-8000</div></div>
<div class="c" style="left:718px;top:378px;width:330px;height:20px;padding:0 3px 1.500px 3px;"><div><span class="k">서울특별시</span> <span class="k">구로구</span> <span class="k">남부순환로</span> 1291 B동 1,3,4층</div></div>
<div class="c" style="left:1049px;top:378px;width:258px;height:20px;padding:0 3px 1.500px 3px;"><div><a>https://k.migrantok.org/content/e001</a></div></div>
<div class="c" style="left:1308px;top:378px;width:600px;height:20px;padding:0 3px 1.500px 3px;"><div>매 <span class="k">주일</span> <span class="k">오후</span> 2시 30분~ 5시 30분, <span class="k">양방</span>, <span class="k">한방</span>, <span class="k">치과</span>(<span class="k">치과는</span> <span class="k">매월</span> 4<span class="k">째주만</span> <span class="k">진료</span>)</div></div>
<div class="c" style="left:46px;top:399px;width:57px;height:164px;padding:0 3px 1.500px 3px;text-align:right;"><div>5</div></div>
<div class="c" style="left:205px;top:399px;width:100px;height:164px;padding:0 3px 1.500px 3px;"><div><span class="k">성북구</span></div></div>
<div class="c" style="left:306px;top:399px;width:152px;height:164px;padding:0 3px 1.500px 3px;"><div><span class="k">성북외국인노동자센터</span></div></div>
<div class="c" style="left:459px;top:399px;width:258px;height:164px;padding:0 3px 1.500px 3px;"><div>02-911-2884</div></div>
<div class="c" style="left:718px;top:399px;width:330px;height:164px;padding:0 3px 1.500px 3px;"><div><span class="k">서울특별시</span> <span class="k">성북구</span> <span class="k">오패산로</span>16길 23</div><div><span class="k">성북외국인노동자센터</span> 1층 <span class="k">힐링센터</span></div></div>
<div class="c" style="left:1049px;top:399px;width:258px;height:164px;padding:0 3px 1.500px 3px;"><div><a>http://www.sbmwc.or.kr/</a></div></div>
<div class="c" style="left:1308px;top:399px;width:600px;height:164px;padding:0 3px 1.500px 3px;"><div><span class="k">무료진료</span> 및 <span class="k">건강검진</span> <span class="k">서비스</span> <span class="k">제공</span></div><div>- <span class="k">서울시에</span> <span class="k">거주하는</span> <span class="k">모든</span> <span class="k">외국인</span></div><div>- 연 3회(3, 6, 9월) <span class="k">마지막주</span> <span class="k">일요일</span> 12:00 ~ 16:00</div><div>- <span class="k">진료과목</span>: <span class="k">내과</span>, <span class="k">외과</span>, <span class="k">피부과</span>, <span class="k">치과</span>, <span class="k">한의과</span>, <span class="k">정형외과</span>, <span class="k">마취통증의학과</span>, <span class="k">약국</span></div><div>- <span class="k">협력기관</span>: (사)<span class="k">열린의사회</span></div><div>&nbsp;</div><div><span class="k">독감예방접종지원사업</span></div><div>- 연 1회(10~11월 중)</div><div>- 50명 <span class="k">제한</span></div><div>- <span class="k">협력기관</span>: (사)<span class="k">한국국제보건의료재단</span></div></div>
<div class="c" style="left:46px;top:564px;width:57px;height:84px;padding:0 3px 1.500px 3px;text-align:right;"><div>6</div></div>
<div class="c" style="left:205px;top:564px;width:100px;height:84px;padding:0 3px 1.500px 3px;"><div><span class="k">도봉구</span></div></div>
<div class="c" style="left:306px;top:564px;width:152px;height:84px;padding:0 3px 1.500px 3px;"><div><span class="k">도봉보건소</span></div></div>
<div class="c" style="left:459px;top:564px;width:258px;height:84px;padding:0 3px 1.500px 3px;"><div>02-2091-4666</div></div>
<div class="c" style="left:718px;top:564px;width:330px;height:84px;padding:0 3px 1.500px 3px;"><div><span class="k">서울시</span> <span class="k">도봉구</span> <span class="k">방학로</span>3길 117(<span class="k">쌍문동</span>) <span class="k">도봉구보건소</span></div></div>
<div class="c" style="left:1049px;top:564px;width:258px;height:84px;padding:0 3px 1.500px 3px;"><div><a>https://health.dobong.go.kr/</a></div></div>
<div class="c" style="left:1308px;top:564px;width:600px;height:84px;padding:0 3px 1.500px 3px;"><div><span class="k">외국인</span> <span class="k">무료</span> <span class="k">건강검진</span></div><div>- <span class="k">서비스</span> <span class="k">대상</span>: <span class="k">외국인근로자</span>, <span class="k">불법체류자</span>(<span class="k">신원비밀보장</span>), <span class="k">조선족</span> <span class="k">동포</span>, <span class="k">결혼이민자</span></div><div>- 월~금 <span class="k">오전</span> 9~11시</div><div>- <span class="k">검사종목</span>: <span class="k">당뇨</span>, <span class="k">간기능</span>, <span class="k">빈혈</span>, <span class="k">결핵</span>, B<span class="k">형간염</span> <span class="k">검사</span></div><div>- <span class="k">장소</span>: <span class="k">도봉구</span> <span class="k">보건소</span> 4층 <span class="k">건강검진실</span></div></div>
<div class="c" style="left:46px;top:649px;width:57px;height:52px;padding:0 3px 1.500px 3px;text-align:right;"><div>7</div></div>
<div class="c" style="left:205px;top:649px;width:100px;height:52px;padding:0 3px 1.500px 3px;"><div><span class="k">양천구</span></div></div>
<div class="c" style="left:306px;top:649px;width:152px;height:52px;padding:0 3px 1.500px 3px;"><div><span class="k">양천구외국인노동자</span> <span class="k">센터</span></div></div>
<div class="c" style="left:459px;top:649px;width:258px;height:52px;padding:0 3px 1.500px 3px;"><div>02- 2643-0808</div></div>
<div class="c" style="left:718px;top:649px;width:330px;height:52px;padding:0 3px 1.500px 3px;"><div><span class="k">서울</span> <span class="k">양천구</span> <span class="k">목동동로</span> 12길59</div><div><span class="k">지하철</span> 5<span class="k">호선</span> <span class="k">오목교역</span> 5<span class="k">번출구</span>(3<span class="k">분거리</span>)</div><div><span class="k">현대아파트</span> 107동 옆</div></div>
<div class="c" style="left:1049px;top:649px;width:258px;height:52px;padding:0 3px 1.500px 3px;"><div><a>https://global.seoul.go.kr/web/cent/fwct/fyacPage.do</a></div></div>
<div class="c" style="left:1308px;top:649px;width:439px;height:52px;padding:0 3px 1.500px 3px;"><div><span class="k">매달</span> <span class="k">의료봉사단</span> <span class="k">주축으로</span> <span class="k">센터</span> <span class="k">내에서</span> <span class="k">무료진료</span> <span class="k">실시</span> 중</div><div>- <span class="k">한방</span>/<span class="k">내과</span>/<span class="k">정형외과</span> <span class="k">진료</span> 및 약 <span class="k">처방</span></div><div>- <span class="k">시간</span>: <span class="k">넷째</span> 주/ 15:00-17:00</div></div>
<div class="c" style="left:46px;top:702px;width:57px;height:68px;padding:0 3px 1.500px 3px;text-align:right;"><div>8</div></div>
<div class="c" style="left:205px;top:702px;width:100px;height:68px;padding:0 3px 1.500px 3px;"><div><span class="k">영등포구</span></div></div>
<div class="c" style="left:306px;top:702px;width:152px;height:68px;padding:0 3px 1.500px 3px;"><div><span class="k">서울시의사회</span> <span class="k">의료봉사단</span></div></div>
<div class="c" style="left:459px;top:702px;width:258px;height:68px;padding:0 3px 1.500px 3px;"><div>02-2676-9030~1</div></div>
<div class="c" style="left:718px;top:702px;width:330px;height:68px;padding:0 3px 1.500px 3px;"><div><span class="k">서울특별시</span> <span class="k">영등포구</span> <span class="k">버드나무로</span> 18길 5</div></div>
<div class="c" style="left:1049px;top:702px;width:258px;height:68px;padding:0 3px 1.500px 3px;"><div><a>http://www.nanumsma.or.kr/bbs/board.php?bo_table=sub51</a></div></div>
<div class="c" style="left:1308px;top:702px;width:600px;height:68px;padding:0 3px 1.500px 3px;"><div><span class="k">무료진료소</span> <span class="k">운영</span></div><div>- <span class="k">격주</span> <span class="k">일요일</span> 13:00~17:00</div><div>- <span class="k">장소</span>: <span class="k">서울시의사회관</span></div><div>- <span class="k">일정</span> <span class="k">참고</span>: <a>http://www.nanumsma.or.kr/bbs/board.php?bo_table=sub51&amp;wr_id=45</a></div></div>
<div class="c" style="left:46px;top:771px;width:57px;height:68px;padding:0 3px 1.500px 3px;text-align:right;"><div>9</div></div>
<div class="c" style="left:205px;top:771px;width:100px;height:68px;padding:0 3px 1.500px 3px;"><div><span class="k">영등포구</span></div></div>
<div class="c" style="left:306px;top:771px;width:152px;height:68px;padding:0 3px 1.500px 3px;"><div><span class="k">요셉나눔재단법인</span></div><div><span class="k">요셉의원</span></div></div>
<div class="c" style="left:459px;top:771px;width:258px;height:68px;padding:0 3px 1.500px 3px;"><div>02 - 2634-1760</div></div>
<div class="c" style="left:718px;top:771px;width:330px;height:68px;padding:0 3px 1.500px 3px;"><div><span class="k">서울시</span> <span class="k">영등포구</span> <span class="k">경인로</span> 100길 6 <span class="k">요셉나눔재단법인</span> <span class="k">요셉의원</span></div></div>
<div class="c" style="left:1049px;top:771px;width:258px;height:68px;padding:0 3px 1.500px 3px;"><div><a>http://www.josephclinic.org/medical/page02.php</a></div></div>
<div class="c" style="left:1308px;top:771px;width:600px;height:68px;padding:0 3px 1.500px 3px;"><div>&quot;<span class="k">진료대상</span> - <span class="k">노숙자</span> 및 <span class="k">행려자</span>, <span class="k">건강보험체납자</span>, <span class="k">난민</span>, <span class="k">미등록</span> <span class="k">외국인</span> <span class="k">근로자</span> 중 <span class="k">입국</span> 3<span class="k">개월</span> <span class="k">이상일</span> <span class="k">경우</span> <span class="k">진료가능</span></div><div><span class="k">진료과목</span> - <span class="k">내과</span> (<span class="k">호흡기</span>, <span class="k">심장</span>, <span class="k">내분비</span>, <span class="k">신장</span>), <span class="k">재활정형외과</span>, <span class="k">이비인후과</span>, <span class="k">영상의학과</span>, <span class="k">외과</span>(<span class="k">일반</span>, <span class="k">흉부</span>), <span class="k">안과</span></div><div><span class="k">신경외과</span>, <span class="k">피부과</span>, <span class="k">치과</span>, <span class="k">물리치료</span>, <span class="k">정형외과</span>, <span class="k">비뇨기과</span>, <span class="k">통증클리닉</span>  ※<span class="k">임상병리</span>, <span class="k">방사선</span>, <span class="k">위내시경</span>(<span class="k">비수면</span>)</div><div>※MRI, CT 등 <span class="k">기타</span> <span class="k">필요한</span> <span class="k">특수</span> <span class="k">검사는</span> 협</div></div>
<div class="c" style="left:46px;top:840px;width:57px;height:84px;padding:0 3px 1.500px 3px;text-align:right;"><div>10</div></div>
<div class="c" style="left:104px;top:840px;width:100px;height:84px;padding:0 3px 1.500px 3px;text-align:center;"><div><span class="k">서울</span></div></div>
<div class="c" style="left:205px;top:840px;width:100px;height:84px;padding:0 3px 1.500px 3px;"><div><span class="k">금천구</span></div></div>
<div class="c" style="left:306px;top:840px;width:152px;height:84px;padding:0 3px 1.500px 3px;"><div><span class="k">희년의료공제회</span></div></div>
<div class="c" style="left:459px;top:840px;width:258px;height:84px;padding:0 3px 1.500px 3px;"><div>02-854-7828</div></div>
<div class="c" style="left:718px;top:840px;width:330px;height:84px;padding:0 3px 1.500px 3px;"><div><span class="k">서울특별시</span> <span class="k">금천구</span> <span class="k">범안로</span>15길 14, <span class="k">덕우빌딩</span>2층(<span class="k">독산동</span>)</div></div>
<div class="c" style="left:1049px;top:840px;width:258px;height:84px;padding:0 3px 1.500px 3px;"><div><a>http://jubileemedical.org/</a></div></div>
<div class="c" style="left:1308px;top:840px;width:600px;height:84px;padding:0 3px 1.500px 3px;"><div><span class="k">매주</span> <span class="k">일요일마다</span> <span class="k">무료진료</span> <span class="k">실시</span></div><div> - <span class="k">주의사항</span>: <span class="k">초진은</span> <span class="k">여권</span>(<span class="k">필요한</span> <span class="k">경우</span> <span class="k">진료의뢰서</span> <span class="k">지참</span>), <span class="k">재진은</span> <span class="k">진료카드</span> <span class="k">지참</span> <span class="k">필요</span></div><div> - <span class="k">주차마다</span> <span class="k">일부</span> <span class="k">검사</span> <span class="k">지원</span>, <span class="k">검사항목은</span> <span class="k">의료진의</span> <span class="k">처방을</span> <span class="k">통해</span> <span class="k">예약제로</span> <span class="k">운영</span> 중</div><div>- 설(<span class="k">구정</span>), <span class="k">추석</span> <span class="k">명절</span> <span class="k">휴진</span></div><div>&nbsp;</div></div>
<div class="c" style="left:46px;top:925px;width:57px;height:52px;padding:0 3px 1.500px 3px;text-align:right;"><div>12</div></div>
<div class="c" style="left:205px;top:925px;width:100px;height:52px;padding:0 3px 1.500px 3px;"><div><span class="k">포천</span></div></div>
<div class="c" style="left:306px;top:925px;width:152px;height:52px;padding:0 3px 1.500px 3px;"><div><span class="k">가산성당</span> - <span class="k">예리코클리닉</span></div><div>&nbsp;</div><div>&nbsp;</div></div>
<div class="c" style="left:459px;top:925px;width:258px;height:52px;padding:0 3px 1.500px 3px;"><div>031-543-1267</div></div>
<div class="c" style="left:718px;top:925px;width:330px;height:52px;padding:0 3px 1.500px 3px;"><div><span class="k">경기도</span> <span class="k">포천군</span> <span class="k">가산면</span> <span class="k">가산로</span> 309<span class="k">번길</span> 19</div></div>
<div class="c" style="left:1049px;top:925px;width:258px;height:52px;padding:0 3px 1.500px 3px;"><div>-</div></div>
<div class="c" style="left:1308px;top:925px;width:439px;height:52px;padding:0 3px 1.500px 3px;"><div>-7월 29일 14:00 ~ 17:00 <span class="k">예정</span></div><div>-8<span class="k">월부터는</span>  2,4<span class="k">번째</span> <span class="k">토요일</span> 14:00 ~ 17:00</div><div>&nbsp;</div></div>
</div>
<!-- BOTTOM -->
<div class="abs" style="left:0;top:982px;width:1920px;height:14px;background:#fff"></div>
<div class="abs" style="left:0;top:982px;width:45px;height:13px;background:#f8f9fa"></div>
<div class="abs" style="left:45px;top:982px;width:1px;height:13px;background:#d0d0d0"></div>
<div class="abs" style="left:48px;top:984px;width:959px;height:9px;border-radius:5px;background:#dadce0"></div>
<div class="abs" style="left:0;top:995px;width:1920px;height:1px;background:#e3e3e3"></div>
<div class="abs" style="left:1909px;top:219px;width:11px;height:776px;background:#fff"></div>
<div class="abs" style="left:1909px;top:219px;width:11px;height:60px;background:#f8f9fa"></div>
<div class="abs" style="left:1908px;top:218px;width:12px;height:1px;background:#c0c0c0"></div>
<div class="abs" style="left:1908px;top:219px;width:1px;height:776px;background:#d4d4d4"></div>
<div class="abs" style="left:1909px;top:279px;width:11px;height:3px;background:#dcdcdc"></div>
<div class="abs" style="left:1910.500px;top:284px;width:8px;height:26px;border-radius:4px;background:#dadce0"></div>
<div class="abs" style="left:1909px;top:951px;width:11px;height:44px;background:#f8f9fa"></div>
<div class="abs" style="left:1893px;top:983px;width:15px;height:12px;background:#f8f9fa"></div>
<div class="abs" style="left:1892px;top:983px;width:1px;height:12px;background:#dcdcdc"></div>
<div class="abs" style="left:1909px;top:950px;width:11px;height:1px;background:#dcdcdc"></div>
<div class="abs" style="left:1909px;top:966px;width:11px;height:1px;background:#dcdcdc"></div>
<div class="abs" style="left:1909px;top:982px;width:11px;height:1px;background:#dcdcdc"></div>
<svg style="left:1912px;top:956px" width="6" height="4" viewBox="0 0 6 4"><path d="M0 4h6L3 0z" fill="#9aa0a6"/></svg>
<svg style="left:1912px;top:973px" width="6" height="4" viewBox="0 0 6 4"><path d="M0 0h6L3 4z" fill="#9aa0a6"/></svg>
<svg style="left:1900px;top:985px" width="4" height="7" viewBox="0 0 4 7"><path d="M0 0v7l4-3.500z" fill="#9aa0a6"/></svg>
<div id="sheetbar" class="abs"></div>
<svg style="left:55px;top:1008px" width="14" height="14" viewBox="0 0 14 14"><path d="M7 2v10M2 7h10" stroke="#444746" stroke-width="1.800"/></svg>
<svg style="left:94px;top:1009px" width="16" height="12" viewBox="0 0 16 12"><path d="M1 1.500h14M1 6h14M1 10.500h14" stroke="#444746" stroke-width="1.700"/></svg>
<div class="abs" style="left:756px;top:996px;width:223px;height:36px;background:#e1e9f7"></div>
<div class="t stab" style="left:146px;top:1007px;font-size:14px;color:#444746;line-height:16px;letter-spacing:.45px;">표지</div>
<svg style="left:186px;top:1013px" width="8" height="4" viewBox="0 0 8 4"><path d="M0 0h8L4 4z" fill="#444746"/></svg>
<div class="t stab" style="left:219px;top:1007px;font-size:14px;color:#444746;line-height:16px;letter-spacing:.45px;">5. 이주민 쉼터</div>
<svg style="left:322px;top:1013px" width="8" height="4" viewBox="0 0 8 4"><path d="M0 0h8L4 4z" fill="#444746"/></svg>
<div class="t stab" style="left:356px;top:1007px;font-size:14px;color:#444746;line-height:16px;letter-spacing:.45px;">6.이주민 센터(현준)</div>
<svg style="left:496px;top:1013px" width="8" height="4" viewBox="0 0 8 4"><path d="M0 0h8L4 4z" fill="#444746"/></svg>
<div class="t stab" style="left:528px;top:1007px;font-size:14px;color:#444746;line-height:16px;letter-spacing:.45px;">1. 전방위 의료지원사업 정리본</div>
<svg style="left:735px;top:1013px" width="8" height="4" viewBox="0 0 8 4"><path d="M0 0h8L4 4z" fill="#444746"/></svg>
<div class="t stab" style="left:767px;top:1007px;font-size:14px;color:#0b57d0;line-height:16px;letter-spacing:.45px;font-weight:bold;">2. 무료진료소/무료진료병원</div>
<svg style="left:959px;top:1013px" width="8" height="4" viewBox="0 0 8 4"><path d="M0 0h8L4 4z" fill="#0b57d0"/></svg>
<div class="t stab" style="left:991px;top:1007px;font-size:14px;color:#444746;line-height:16px;letter-spacing:.45px;">3. 공제회</div>
<svg style="left:1061px;top:1013px" width="8" height="4" viewBox="0 0 8 4"><path d="M0 0h8L4 4z" fill="#444746"/></svg>
<div class="t stab" style="left:1094px;top:1007px;font-size:14px;color:#444746;line-height:16px;letter-spacing:.45px;">4. 외국인근로자 등 의료지원사업 시행기관(Team.민들레)</div>
<svg style="left:1475px;top:1013px" width="8" height="4" viewBox="0 0 8 4"><path d="M0 0h8L4 4z" fill="#444746"/></svg>
<div class="t" style="left:1688px;top:1009px;font-size:14px;color:#444746;line-height:16px;letter-spacing:.3px">1개 행 중 11개 행 표시됨</div>
<svg style="left:1889px;top:1010px" width="7" height="11" viewBox="0 0 7 11"><path d="M6 1L1.500 5.500 6 10" fill="none" stroke="#444746" stroke-width="1.600"/></svg>
<div class="abs" style="left:1581px;top:925px;width:311px;height:95px;background:#f9f9f9;border:1px solid #e2e2e2;border-radius:4px;box-shadow:0 3px 8px rgba(0,0,0,.16)"></div>
<div class="t" style="left:1590px;top:933px;font-size:12px;color:#1b1b1b;line-height:14px;letter-spacing:.2px">한국어</div>
<div class="t" style="left:1590px;top:949px;font-size:12px;color:#1b1b1b;line-height:14px;letter-spacing:.2px">Microsoft 입력기</div>
<div class="t" style="left:1590px;top:981px;font-size:12px;color:#1b1b1b;line-height:14px;letter-spacing:.2px">입력 방법을 전환하려면 Windows 키 + 스페이스를 누</div>
<div class="t" style="left:1590px;top:997px;font-size:12px;color:#1b1b1b;line-height:14px;letter-spacing:.2px">르세요.</div>
<div id="taskbar" class="abs"></div>
<div class="abs" style="left:0;top:1032px;width:1920px;height:1px;background:#b9c6c7"></div>
<svg style="left:21px;top:1045px" width="23" height="23" viewBox="0 0 23 23"><defs><linearGradient id="wg" x1="0" y1="0" x2="1" y2="1"><stop offset="0" stop-color="#5cc8fb"/><stop offset="1" stop-color="#0a7bd6"/></linearGradient></defs><g fill="url(#wg)"><rect width="11" height="11" rx=".8"/><rect x="12" width="11" height="11" rx=".8"/><rect y="12" width="11" height="11" rx=".8"/><rect x="12" y="12" width="11" height="11" rx=".8"/></g></svg>
<div class="abs" style="left:57px;top:1041px;width:219px;height:31px;border-radius:16px;background:rgba(255,255,255,.72);border:1px solid rgba(0,0,0,.10)"></div>
<svg style="left:68px;top:1048px" width="16" height="16" viewBox="0 0 16 16"><circle cx="6.500" cy="6.500" r="5" fill="none" stroke="#222" stroke-width="1.500"/><path d="M10.200 10.200L15 15" stroke="#222" stroke-width="1.700"/></svg>
<div class="t" style="left:94px;top:1048px;font-size:14px;color:#5b5f62;line-height:16px">검색</div>
<svg style="left:251px;top:1046px" width="20" height="22" viewBox="0 0 20 22"><circle cx="10" cy="10" r="8.600" fill="#eaf6ff" stroke="#2a8ee6" stroke-width="1.600"/><path d="M3.500 15.500L2.500 20.500l5-2.300z" fill="#2a8ee6"/><path d="M7.500 4.500l2 .8v8.500l-2 1.200zM9.500 9l4.300 1.700v2.300l-4.300 2.600z" fill="#1470d8"/></svg>
<svg style="left:288px;top:1045px" width="25" height="23" viewBox="0 0 25 23"><rect x="7" y="0" width="18" height="16" rx="2" fill="#f4f4f4" stroke="#d8d8d8" stroke-width=".6"/><rect x="0" y="6" width="18" height="17" rx="2" fill="#2b2b2b"/><rect x="7" y="6" width="11" height="10" fill="#bdbdbd"/></svg>
<svg style="left:331px;top:1039px" width="36" height="30" viewBox="0 0 36 30"><defs><linearGradient id="mg" x1="0" y1="0" x2="1" y2="1"><stop offset="0" stop-color="#fdb94a"/><stop offset="1" stop-color="#f47a1f"/></linearGradient><mask id="mm"><rect width="36" height="30" fill="#fff"/><circle cx="11.500" cy="9" r="12.800" fill="#000"/></mask></defs><circle cx="14" cy="15" r="13.500" fill="url(#mg)" mask="url(#mm)"/><rect x="12" y="1" width="23" height="15" rx="7.500" fill="#eef6f6"/></svg>
<div class="t" style="left:346px;top:1042px;font-size:11px;color:#111;line-height:12px">22°</div>
<svg style="left:375px;top:1043px" width="26" height="26" viewBox="0 0 26 26"><defs><linearGradient id="cg" x1="0" y1="0" x2="1" y2="1"><stop offset="0" stop-color="#8b8be8"/><stop offset="1" stop-color="#5b57c9"/></linearGradient></defs><circle cx="13.500" cy="12" r="11.500" fill="url(#cg)"/><path d="M4 18l-2.500 7L10 22z" fill="#6a66d6"/><rect x="7" y="8" width="9" height="8" rx="1.800" fill="#fff"/><path d="M16.500 11.200l4-2.500v7l-4-2.500z" fill="#fff"/></svg>
<svg style="left:420px;top:1044px" width="26" height="24" viewBox="0 0 26 24"><path d="M1 3.500A1.500 1.500 0 0 1 2.500 2h6l2.500 2.500H1z" fill="#e8a317"/><rect x="1" y="4" width="24" height="18" rx="1.500" fill="#fcd256"/><path d="M1 9h24v11.500A1.500 1.500 0 0 1 23.500 22h-21A1.500 1.500 0 0 1 1 20.500z" fill="#fbc531"/><rect x="7" y="15" width="12" height="7" rx="1" fill="#1f86e0"/><rect x="7" y="15" width="12" height="2.500" fill="#1565c0"/></svg>
<svg style="left:464px;top:1043px" width="26" height="26" viewBox="0 0 48 48"><circle cx="24" cy="24" r="22" fill="#fff"/><path d="M24 2a22 22 0 0 1 19.050 11H24a11 11 0 0 0-9.530 5.500L5.950 13A22 22 0 0 1 24 2z" fill="#ea4335"/><path d="M43.050 13A22 22 0 0 1 24 46l9.530-16.500A11 11 0 0 0 33.530 18.500L43.050 13z" fill="#fbbc04"/><path d="M43.050 13H24a11 11 0 0 1 9.530 5.500z" fill="#fbbc04"/><path d="M5.950 13l9.520 16.500A11 11 0 0 0 24 35l-.01 11A22 22 0 0 1 5.950 13z" fill="#34a853"/><path d="M24 35a11 11 0 0 0 9.530-5.500L24 46z" fill="#34a853"/><circle cx="24" cy="24" r="9.500" fill="#fff"/><circle cx="24" cy="24" r="7.600" fill="#4285f4"/></svg>
<svg style="left:508px;top:1043px" width="26" height="26" viewBox="0 0 26 26"><circle cx="13" cy="13" r="12" fill="#1b8fe8"/><circle cx="13" cy="13" r="12" fill="none" stroke="#0a5fc0" stroke-width="1"/><g stroke="#d8ecff" stroke-width="1.300"><path d="M13 1l6 10M25 13l-11 1M19.500 23.500l-6-10M7 23.500l5.500-9.500M1 13h11M7 2.500l6 10"/></g><circle cx="13" cy="13" r="5.500" fill="#2b2f3a"/></svg>
<svg style="left:553px;top:1044px" width="24" height="24" viewBox="0 0 24 24"><rect width="24" height="24" fill="#050505"/><path d="M3 22l2-8 3-7 3-4 1 5 3 3 3 1 2 4-3 1-3-2-3 2-2 5z" fill="#f2f2f2"/><path d="M7 12l3 2 2 3" stroke="#050505" stroke-width="1" fill="none"/></svg>
<div class="t" style="left:568px;top:1045px;font-size:10px;color:#fff;line-height:10px">7</div>
<div class="abs" style="left:597px;top:1045px;width:23px;height:22px;border-radius:4px;background:#330000;border:1px solid #4a1300"></div>
<div class="t" style="left:597px;width:23px;text-align:center;top:1049px;font-size:13px;font-weight:bold;color:#ff9a00;line-height:14px;letter-spacing:-.3px">Ai</div>
<div class="abs" style="left:641px;top:1045px;width:23px;height:22px;border-radius:4px;background:#001e36;border:1px solid #0a2c4a"></div>
<div class="t" style="left:641px;width:23px;text-align:center;top:1049px;font-size:13px;font-weight:bold;color:#31a8ff;line-height:14px;letter-spacing:-.3px">Ps</div>
<div class="abs" style="left:685px;top:1045px;width:23px;height:22px;border-radius:4px;background:#470137;border:1px solid #5a0a48"></div>
<div class="t" style="left:685px;width:23px;text-align:center;top:1049px;font-size:13px;font-weight:bold;color:#ff61f6;line-height:14px;letter-spacing:-.3px">Xd</div>
<svg style="left:728px;top:1044px" width="25" height="24" viewBox="0 0 25 24"><rect width="25" height="24" rx="3" fill="#1e1e1e"/><path d="M9.500 4h3v5h-3a2.500 2.500 0 0 1 0-5z" fill="#f24e1e"/><path d="M12.500 4h3a2.500 2.500 0 0 1 0 5h-3z" fill="#ff7262"/><path d="M9.500 9h3v5h-3a2.500 2.500 0 0 1 0-5z" fill="#a259ff"/><circle cx="15" cy="11.500" r="2.500" fill="#1abcfe"/><path d="M9.500 14h3v2.500a2.500 2.500 0 1 1-3-2.500z" fill="#0acf83"/></svg>
<svg style="left:773px;top:1044px" width="24" height="24" viewBox="0 0 24 24"><rect width="24" height="24" rx="1" fill="#fae100"/><ellipse cx="12" cy="11" rx="8.500" ry="6.500" fill="#3c1e1e"/><path d="M7.500 16l-1 4 4-3z" fill="#3c1e1e"/></svg>
<div class="t" style="left:773px;width:24px;text-align:center;top:1053px;font-size:6px;font-weight:bold;color:#fae100;line-height:6px">TALK</div>
<svg style="left:816px;top:1043px" width="26" height="27" viewBox="0 0 26 27"><rect x="2.500" y="2.500" width="13" height="13" rx="1" fill="#fff" stroke="#e5511d" stroke-width="2" stroke-dasharray="3 1.600"/><path d="M9 9h8v10" fill="none" stroke="#9a9a9a" stroke-width="2.200"/><path d="M17 14l6-2M17 18l-2 6" stroke="#8a8a8a" stroke-width="1.500"/><circle cx="23.500" cy="11.500" r="1.800" fill="none" stroke="#1e88e5" stroke-width="1.300"/><circle cx="14.500" cy="24.500" r="1.800" fill="none" stroke="#1e88e5" stroke-width="1.300"/></svg>
<svg style="left:860px;top:1044px" width="26" height="24" viewBox="0 0 26 24"><rect x="7" y="1" width="18" height="22" rx="1.500" fill="#41a5ee"/><rect x="7" y="6.500" width="18" height="5.500" fill="#2b7cd3"/><rect x="7" y="12" width="18" height="5.500" fill="#185abd"/><path d="M7 17.500h18v4A1.500 1.500 0 0 1 23.500 23h-15A1.500 1.500 0 0 1 7 21.500z" fill="#103f91"/><rect x="0" y="5.500" width="13" height="13" rx="1.300" fill="#185abd"/><path d="M2.500 8.500h1.500l1.100 5 1.200-5h1.400l1.200 5 1.100-5H11.500l-1.800 7H8.200L7 10.700 5.800 15.500H4.300z" fill="#fff"/></svg>
<svg style="left:905px;top:1044px" width="24" height="24" viewBox="0 0 24 24"><rect width="24" height="24" rx="4" fill="#fff"/><path d="M10 6.500H6.500v8.200L9 17.500h1.500M14 6.500h3.500v11H14" fill="none" stroke="#12a86b" stroke-width="2.200"/></svg>
<svg style="left:949px;top:1044px" width="24" height="24" viewBox="0 0 24 24"><rect width="24" height="24" rx="4" fill="#fff"/><path d="M10 6.500H6.500v8.200L9 17.500h1.500M14 6.500h3.500v11H14" fill="none" stroke="#12a86b" stroke-width="2.200"/></svg>
<div class="abs" style="left:986px;top:1037px;width:38px;height:38px;border-radius:4px;background:rgba(255,255,255,.55);border:1px solid rgba(255,255,255,.7)"></div>
<svg style="left:991px;top:1045px" width="27" height="27" viewBox="0 0 48 48"><circle cx="24" cy="24" r="22" fill="#fff"/><path d="M24 2a22 22 0 0 1 19.050 11H24a11 11 0 0 0-9.530 5.500L5.950 13A22 22 0 0 1 24 2z" fill="#ea4335"/><path d="M43.050 13A22 22 0 0 1 24 46l9.530-16.500A11 11 0 0 0 33.530 18.500L43.050 13z" fill="#fbbc04"/><path d="M43.050 13H24a11 11 0 0 1 9.530 5.500z" fill="#fbbc04"/><path d="M5.950 13l9.520 16.500A11 11 0 0 0 24 35l-.01 11A22 22 0 0 1 5.950 13z" fill="#34a853"/><path d="M24 35a11 11 0 0 0 9.530-5.500L24 46z" fill="#34a853"/><circle cx="24" cy="24" r="9.500" fill="#fff"/><circle cx="24" cy="24" r="7.600" fill="#4285f4"/></svg>
<svg style="left:1005px;top:1039px" width="16" height="16" viewBox="0 0 16 16"><defs><clipPath id="cpc"><circle cx="8" cy="8" r="8"/></clipPath></defs><circle cx="8" cy="8" r="8" fill="#5b9a32"/><g clip-path="url(#cpc)" fill="#d7e8cf"><circle cx="8" cy="6.300" r="2.700"/><ellipse cx="8" cy="14.500" rx="5.500" ry="4"/></g></svg>
<svg style="left:1036px;top:1043px" width="26" height="26" viewBox="0 0 26 26"><defs><linearGradient id="eg" x1="0" y1="0" x2="1" y2="0"><stop offset="0" stop-color="#2fc1d8"/><stop offset="1" stop-color="#5fd35a"/></linearGradient></defs><circle cx="13" cy="13" r="12" fill="#0c59a4"/><path d="M1.200 11.500C2 5.500 7 1 13 1c6.600 0 12 5 12 11 0 3-2 5.500-5.500 5.500-3 0-4.500-1.500-4.200-3.200.3-1.200.2-3.300-2.300-3.800-4-.8-8.500 1-11.800 1z" fill="url(#eg)"/><path d="M9 16.500c0 4 3.500 7.500 8.500 7.500 2 0 4-.6 5.500-2-2 3-5.500 4-10 3-6-1.500-9-7-7.500-12 1-1.500 3.500-2.500 6-2-2 1.500-2.500 3.500-2.500 5.500z" fill="#1a73c8"/><path d="M15.300 14.300c-.3 1.700 1.200 3.200 4.200 3.200 1.500 0 2.800-.5 3.800-1.300-1.500 2.600-4.800 3.600-7.600 2.400-1.500-.8-1.600-2.900-.4-4.300z" fill="#e9f4f6"/></svg>
<div class="abs" style="left:782px;top:1072px;width:6px;height:3px;border-radius:2px;background:#8a9294"></div>
<div class="abs" style="left:958px;top:1072px;width:6px;height:3px;border-radius:2px;background:#8a9294"></div>
<div class="abs" style="left:1046px;top:1072px;width:6px;height:3px;border-radius:2px;background:#8a9294"></div>
<div class="abs" style="left:997px;top:1072px;width:16px;height:3px;border-radius:2px;background:#0a6cd0"></div>
<svg style="left:1652px;top:1051px" width="12" height="8" viewBox="0 0 12 8"><path d="M1 7l5-5 5 5" fill="none" stroke="#1b1b1b" stroke-width="1.500"/></svg>
<div class="t" style="left:1682px;top:1047px;font-size:16px;color:#1b1b1b;line-height:18px">가</div>
<div class="abs" style="left:1707px;top:1037px;width:42px;height:38px;border-radius:4px;background:rgba(255,255,255,.5);border:1px solid rgba(255,255,255,.55)"></div>
<div class="t" style="left:1720px;top:1047px;font-size:16px;color:#1b1b1b;line-height:18px">한</div>
<svg style="left:1757px;top:1048px" width="18" height="14" viewBox="0 0 18 14"><g fill="none" stroke="#1b1b1b" stroke-width="1.300" stroke-linecap="round"><path d="M1 5.200a11.300 11.300 0 0 1 16 0"/><path d="M3.600 7.900a7.600 7.600 0 0 1 10.800 0"/><path d="M6.200 10.500a4 4 0 0 1 5.600 0"/></g><circle cx="9" cy="12.600" r="1.200" fill="#1b1b1b"/></svg>
<svg style="left:1781px;top:1048px" width="18" height="15" viewBox="0 0 18 15"><path d="M1 5.500h2.600L7.500 2v11L3.600 9.500H1z" fill="none" stroke="#1b1b1b" stroke-width="1.200" stroke-linejoin="round"/><path d="M10 5a3.500 3.500 0 0 1 0 5" fill="none" stroke="#1b1b1b" stroke-width="1.200"/><path d="M12.300 3a6.500 6.500 0 0 1 0 9" fill="none" stroke="#9aa7aa" stroke-width="1.100"/><path d="M14.500 1.200a9.500 9.500 0 0 1 0 12.600" fill="none" stroke="#b7c3c5" stroke-width="1"/></svg>
<svg style="left:1804px;top:1047px" width="20" height="16" viewBox="0 0 20 16"><rect x="1.500" y="5" width="15" height="9" rx="2" fill="#1b1b1b"/><rect x="17" y="7.500" width="2" height="4" rx="1" fill="#1b1b1b"/><path d="M4 1v6M1.500 4.500l2.500 3 2.500-3" fill="none" stroke="#1b1b1b" stroke-width="1.300"/></svg>
<div class="t" style="left:1800px;width:101px;text-align:right;top:1040px;font-size:12px;color:#1b1b1b;line-height:14px;letter-spacing:.2px">오후 11:54</div>
<div class="t" style="left:1800px;width:101px;text-align:right;top:1057px;font-size:12px;color:#1b1b1b;line-height:14px;letter-spacing:.2px">2023-09-07</div>
</body>
</html>
